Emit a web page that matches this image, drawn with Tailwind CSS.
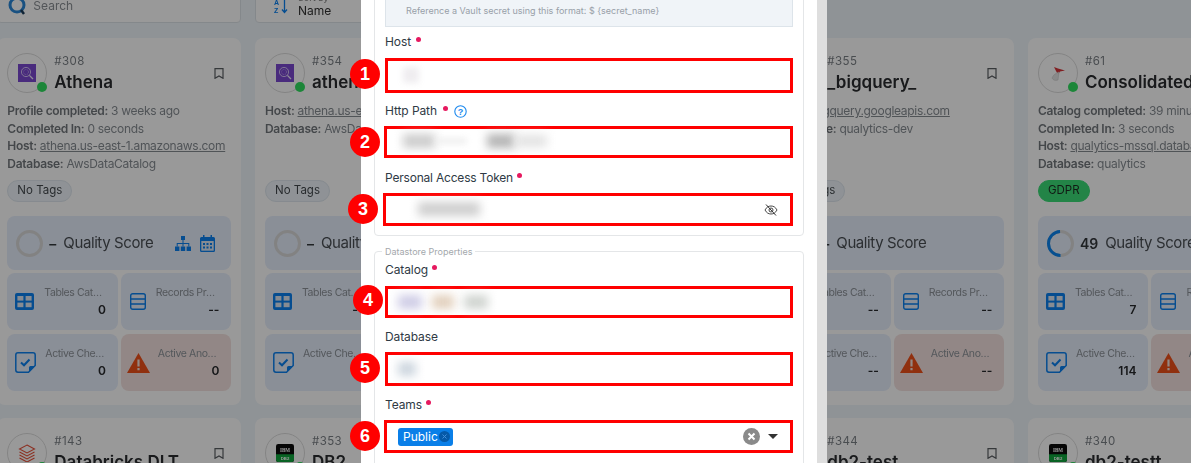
<!DOCTYPE html>
<html lang="en">
<head>
  <meta charset="UTF-8">
  <meta name="viewport" content="width=device-width, initial-scale=1.0">
  <title>Add Datastore</title>
  <script src="https://cdn.jsdelivr.net/npm/@tailwindcss/browser@4"></script>
</head>
<body class="m-0 font-['Inter','Noto_Sans',sans-serif]">
  <!-- shared icons -->
  <svg class="hidden">
    <symbol id="i-bookmark" viewBox="0 0 10 11"><path d="M1 .7h8v9.6L5 8 1 10.3z" fill="none" stroke="currentColor" stroke-width="1.2"/></symbol>
    <symbol id="i-table" viewBox="0 0 19 17"><rect width="19" height="17" rx="2" fill="currentColor"/><rect x="2.4" y="3" width="6" height="4.6" fill="#dfe8f3"/><rect x="10.6" y="3" width="6" height="4.6" fill="#dfe8f3"/><rect x="2.4" y="9.6" width="6" height="4.6" fill="#dfe8f3"/><rect x="10.6" y="9.6" width="6" height="4.6" fill="#dfe8f3"/></symbol>
    <symbol id="i-records" viewBox="0 0 16 17"><rect x=".7" y=".7" width="14.6" height="15.6" rx="2" fill="none" stroke="currentColor" stroke-width="1.4"/><path d="M1 6h14M1 11h14" stroke="currentColor" stroke-width="1.4"/></symbol>
    <symbol id="i-check" viewBox="0 0 21 21"><path d="M3 .8h15A2.2 2.2 0 0 1 20.200 3v10.500L13.500 20.200H3A2.200 2.200 0 0 1 .8 18V3A2.200 2.200 0 0 1 3 .8z" fill="none" stroke="currentColor" stroke-width="1.500"/><path d="M14 20v-4.500a1.500 1.500 0 0 1 1.500-1.500H20z" fill="currentColor"/><path d="M6 10.500l3 2.800 5.500-5.800" fill="none" stroke="currentColor" stroke-width="2"/></symbol>
    <symbol id="i-warning" viewBox="0 0 23 20"><path d="M11.500 0L23 20H0z" fill="currentColor"/><path d="M10.400 6.500h2.200v7h-2.200zM10.400 15h2.200v2.300h-2.200z" fill="#f6e3de"/></symbol>
    <symbol id="i-tree" viewBox="0 0 16 15"><g fill="currentColor"><rect x="6" y="0" width="4" height="4"/><rect x="0" y="10.500" width="4.400" height="4.500"/><rect x="5.800" y="10.500" width="4.400" height="4.500"/><rect x="11.600" y="10.500" width="4.400" height="4.500"/><path d="M7.500 4h1v3h5.800v3.500h-1V8H8.500v2.500h-1V8H2.700v2.500h-1V7h5.800z"/></g></symbol>
    <symbol id="i-calendar" viewBox="0 0 15 17"><path d="M1.500 2h12A1.500 1.500 0 0 1 15 3.500v12a1.500 1.500 0 0 1-1.500 1.500h-12A1.500 1.500 0 0 1 0 15.500v-12A1.500 1.500 0 0 1 1.500 2z" fill="currentColor"/><rect x="1.300" y="6" width="12.400" height="9.700" fill="#dfe8f3"/><path d="M3 0h1.500v3H3zM10.500 0H12v3h-1.500z" fill="currentColor"/><g fill="currentColor"><rect x="3" y="8" width="2" height="2"/><rect x="6.500" y="8" width="2" height="2"/><rect x="10" y="8" width="2" height="2"/><rect x="3" y="11.500" width="2" height="2"/><rect x="6.500" y="11.500" width="2" height="2"/><rect x="10" y="11.500" width="2" height="2"/></g></symbol>
    <symbol id="l-athena" viewBox="0 0 18 18"><rect width="18" height="18" fill="#7a48d0"/><circle cx="8" cy="8" r="4.600" fill="none" stroke="#dccdf7" stroke-width=".9"/><circle cx="8" cy="8" r="2.500" fill="none" stroke="#dccdf7" stroke-width=".6" stroke-dasharray="1 .8"/><path d="M11.400 11.400l3.600 3.600" stroke="#efe8fc" stroke-width="1.300"/></symbol>
    <symbol id="l-bigquery" viewBox="0 0 18 18"><path d="M5 1h8l4 8-4 8H5L1 9z" fill="#5a8de8"/><circle cx="8.500" cy="8.500" r="3.500" fill="none" stroke="#fff" stroke-width="1.300"/><path d="M11 11l3 3" stroke="#fff" stroke-width="1.400"/></symbol>
    <symbol id="l-mssql" viewBox="0 0 18 18"><path d="M5 3l4 1.500 7 2-5 1-2 3-2-3.500z" fill="#d8353a"/><path d="M3 14c1-3 4-5 7-6l-1 8c-3 1-5 0-6-2z" fill="#e4e4e4" stroke="#c4c4c4" stroke-width=".5"/></symbol>
    <symbol id="l-databricks" viewBox="0 0 18 18"><g fill="none" stroke="#e8533c" stroke-width="1.100"><path d="M9 1l7.500 4L9 9 1.500 5z"/><path d="M1.500 8L9 12l7.500-4"/><path d="M1.500 11L9 15l7.500-4"/><path d="M1.500 14L9 18l7.500-4"/></g></symbol>
    <symbol id="l-db2" viewBox="0 0 16 16"><rect width="16" height="16" rx="2" fill="#0b0b0b"/><path d="M0 9h16v5a2 2 0 0 1-2 2H2a2 2 0 0 1-2-2z" fill="#0fa53c"/><text x="8" y="7" font-size="4.500" font-weight="700" text-anchor="middle" fill="#fff" font-family="Liberation Serif">IBM</text><text x="8" y="14" font-size="3.800" font-weight="700" text-anchor="middle" fill="#fff" font-family="Liberation Sans">DB2</text></symbol>
  </svg>

  <div class="relative h-[463px] w-[1191px] overflow-hidden bg-[#eef5fa]">
    <!-- page behind the dialog -->
    <div class="blur-[0.5px]">
      <div class="-mt-[13px] ml-[-2.67px] grid grid-cols-[repeat(5,244px)] gap-x-[13.67px]">
        <div class="flex h-[36px] items-end gap-[6px] rounded border border-[#dde3e8] bg-white pb-[8px] pl-[10px]">
          <svg class="mb-[-1px] h-[19px] w-[19px] text-[#2b88d8]" viewBox="0 0 19 19"><circle cx="9" cy="9" r="7" fill="none" stroke="currentColor" stroke-width="3"/><path d="M13 14l3 4" stroke="#1c3d5a" stroke-width="2.500"/></svg>
          <span class="text-[12px] leading-[16px] text-[#8a8f94]">Search</span>
        </div>
        <div class="col-span-2 flex h-[36px] items-end gap-[9px] rounded border border-[#dde3e8] bg-white pb-[4px] pl-[18px]">
          <svg class="mb-[4px] h-[15px] w-[15px] text-[#0a80f0]" viewBox="0 0 15 15"><text x="0" y="6" font-size="7" font-weight="700" fill="currentColor" font-family="Liberation Sans">A</text><text x="0" y="14" font-size="7" font-weight="700" fill="currentColor" font-family="Liberation Sans">Z</text><path d="M10.500 0v13M8 10.500l2.500 3 2.500-3" fill="none" stroke="currentColor" stroke-width="1.300"/></svg>
          <div class="flex flex-col">
            <span class="text-[9px] leading-[10px] text-[#777]">Sort by</span>
            <span class="text-[12px] leading-[15px] text-[#333]">Name</span>
          </div>
        </div>
      </div>
      <div id="cards" class="ml-[-2.67px] mt-[15px] grid grid-cols-[repeat(5,244px)] gap-x-[13.67px] gap-y-[13px]"></div>
    </div>

    <!-- dim overlay -->
    <div class="absolute inset-0 bg-black/40"></div>

    <!-- dialog -->
    <div class="absolute left-[361px] top-0 flex h-full">
      <div class="flex w-[456px] flex-col gap-[15px] bg-white px-[13px] text-[#2f3a45]">
        <div class="-mt-[10px] h-[246px] shrink-0 rounded border border-[#e4e6e8] px-[10px]">
          <div class="h-[36px] border border-[#dde4ea] bg-[#f0f4f8] pl-[20px] pt-[12px] text-[9px] leading-[14px] text-[#98a0a8]">Reference a Vault secret using this format: $ {secret_name}</div>

          <div class="mt-[7px] flex h-[16px] items-center gap-[5px] text-[12px] tracking-[-0.1px]">Host <span class="mb-[5px] h-[5px] w-[5px] rounded-full bg-[#e6195f]"></span></div>
          <div class="relative mt-[8px] h-[35px] border-[3px] border-[#f00] bg-white">
            <span class="absolute left-[15px] top-[6px] h-[16px] w-[16px] bg-[#efedf0] blur-[3px]"></span>
            <span class="absolute left-[-38px] top-[-2px] flex h-[30px] w-[30px] items-center justify-center rounded-full bg-[#f00] font-['Liberation_Sans'] text-[18px] font-bold text-white">1</span>
          </div>

          <div class="mt-[10px] flex h-[16px] items-center gap-[6px] text-[12px] tracking-[-0.1px]">Http Path <span class="mb-[5px] h-[5px] w-[5px] rounded-full bg-[#e6195f]"></span>
            <svg class="h-[13px] w-[13px] text-[#1a88ee]" viewBox="0 0 13 13"><circle cx="6.500" cy="6.500" r="5.700" fill="none" stroke="currentColor" stroke-width="1.100"/><text x="6.500" y="9.700" font-size="9" font-weight="600" text-anchor="middle" fill="currentColor" font-family="Liberation Sans">?</text></svg>
          </div>
          <div class="relative ml-[-1px] mt-[7px] h-[32px] border-[3px] border-[#f00] bg-white">
            <span class="absolute left-[16px] top-[5px] h-[14px] w-[32px] bg-[#cccccc] blur-[5px]"></span>
            <span class="absolute left-[50px] top-[9px] h-[6px] w-[30px] bg-[#eeeeee] blur-[3px]"></span>
            <span class="absolute left-[100px] top-[5px] h-[14px] w-[28px] bg-[#b4b4b4] blur-[5px]"></span>
            <span class="absolute left-[128px] top-[6px] h-[12px] w-[32px] bg-[#e2e2e2] blur-[5px]"></span>
            <span class="absolute left-[-37px] top-[-2px] flex h-[30px] w-[30px] items-center justify-center rounded-full bg-[#f00] font-['Liberation_Sans'] text-[18px] font-bold text-white">2</span>
          </div>

          <div class="mt-[12px] flex h-[16px] items-center gap-[4px] text-[12px] tracking-[-0.2px]">Personal Access Token <span class="mb-[5px] h-[5px] w-[5px] rounded-full bg-[#e6195f]"></span></div>
          <div class="relative ml-[-2px] mt-[7px] flex h-[33px] items-center justify-end border-[3px] border-[#f00] bg-white pr-[12px]">
            <span class="absolute left-[32px] top-[6px] h-[14px] w-[62px] bg-[#cfcfcf] blur-[5px]"></span>
            <svg class="h-[14px] w-[14px] text-[#333]" viewBox="0 0 14 14"><path d="M1 7c1.500-2.800 3.500-4 6-4s4.500 1.200 6 4c-1.500 2.800-3.500 4-6 4S2.500 9.800 1 7z" fill="none" stroke="currentColor" stroke-width=".9"/><circle cx="7" cy="7" r="2" fill="none" stroke="currentColor" stroke-width=".9"/><path d="M2 1.500l10 11" stroke="currentColor" stroke-width="1"/></svg>
            <span class="absolute left-[-38px] top-[-2px] flex h-[30px] w-[30px] items-center justify-center rounded-full bg-[#f00] font-['Liberation_Sans'] text-[18px] font-bold text-white">3</span>
          </div>
        </div>

        <div class="relative h-[260px] shrink-0 rounded border border-[#e4e6e8] px-[10px] pt-[10px]">
          <span class="absolute left-[7px] top-[-7px] bg-white px-[3px] text-[9px] leading-[13px] text-[#a4a8ac]">Datastore Properties</span>

          <div class="flex h-[16px] items-center gap-[4px] text-[12px] tracking-[-0.1px]">Catalog <span class="mb-[5px] h-[5px] w-[5px] rounded-full bg-[#e6195f]"></span></div>
          <div class="relative mt-[8px] h-[32px] border-[3px] border-[#f00] bg-white">
            <span class="absolute left-[10px] top-[6px] h-[14px] w-[24px] bg-[#cfcde6] blur-[5px]"></span>
            <span class="absolute left-[44px] top-[6px] h-[14px] w-[22px] bg-[#e2d0bd] blur-[5px]"></span>
            <span class="absolute left-[76px] top-[6px] h-[14px] w-[24px] bg-[#d0d4d0] blur-[5px]"></span>
            <span class="absolute left-[-35px] top-[-4px] flex h-[30px] w-[30px] items-center justify-center rounded-full bg-[#f00] font-['Liberation_Sans'] text-[18px] font-bold text-white">4</span>
          </div>

          <div class="mt-[11px] flex h-[16px] items-center text-[12px] tracking-[-0.1px]">Database</div>
          <div class="relative mt-[7px] h-[34px] border-[3px] border-[#f00] bg-white">
            <span class="absolute left-[10px] top-[7px] h-[14px] w-[18px] bg-[#ccd5de] blur-[5px]"></span>
            <span class="absolute left-[-38px] top-[-2px] flex h-[30px] w-[30px] items-center justify-center rounded-full bg-[#f00] font-['Liberation_Sans'] text-[18px] font-bold text-white">5</span>
          </div>

          <div class="mt-[11px] flex h-[16px] items-center gap-[4px] text-[12px] tracking-[-0.1px]">Teams <span class="mb-[5px] h-[5px] w-[5px] rounded-full bg-[#e6195f]"></span></div>
          <div class="relative ml-[-1px] mt-[7px] flex h-[33px] items-center border-[3px] border-[#f00] bg-white pl-[11px] pr-[12px]">
            <span class="flex h-[18px] w-[55px] items-center gap-[1px] rounded-[3px] bg-[#0a7fe8] pl-[5px] text-[12px] text-white">Public
              <svg class="h-[11px] w-[11px] shrink-0" viewBox="0 0 11 11"><circle cx="5.500" cy="5.500" r="5.500" fill="#0559a8"/><path d="M3.500 3.500l4 4M7.500 3.500l-4 4" stroke="#3f8fdc" stroke-width="1"/></svg>
            </span>
            <svg class="ml-auto h-[17px] w-[17px]" viewBox="0 0 17 17"><circle cx="8.500" cy="8.500" r="8.500" fill="#8a8a8a"/><path d="M5.500 5.500l6 6M11.500 5.500l-6 6" stroke="#fff" stroke-width="2"/></svg>
            <span class="ml-[8px] h-0 w-0 border-x-[5px] border-t-[5px] border-x-transparent border-t-[#333]"></span>
            <span class="absolute left-[-37px] top-[-2px] flex h-[30px] w-[30px] items-center justify-center rounded-full bg-[#f00] font-['Liberation_Sans'] text-[18px] font-bold text-white">6</span>
          </div>
        </div>
      </div>
      <div class="w-[10px] bg-[#dedede]"></div>
    </div>
  </div>

  <script>
    // Datastore cards behind the dialog, null = card fully hidden by the dialog
    const datastores = [
      { id: 308, name: 'Athena', logo: 'l-athena', tag: 'No Tags', tools: true, score: '–', ring: false,
        details: [['Profile completed:', '3 weeks ago'], ['Completed In:', '0 seconds'], ['Host:', 'athena.us-east-1.amazonaws.com', true], ['Database:', 'AwsDataCatalog']],
        stats: ['0', '--', '0', '0'] },
      { id: 354, name: 'athena', logo: 'l-athena', tag: 'No Tags', score: '–', ring: false,
        details: [['Host:', 'athena.us-east-1.amazonaws.com', true], ['Database:', 'AwsDataCatalog']],
        stats: ['--', '--', '--', '--'] },
      null,
      { id: 355, name: '_bigquery_', logo: 'l-bigquery', tag: 'No Tags', score: '–', ring: false,
        details: [['Host:', 'bigquery.googleapis.com', true], ['Database:', 'qualytics-dev']],
        stats: ['--', '--', '--', '--'] },
      { id: 61, name: 'Consolidated Balance', logo: 'l-mssql', tag: 'GDPR', score: '49', ring: true,
        details: [['Catalog completed:', '39 minutes ago'], ['Completed In:', '3 seconds'], ['Host:', 'qualytics-mssql.database.windows.net', true], ['Database:', 'qualytics']],
        stats: ['7', '--', '114', '--'] },
      { id: 143, name: 'Databricks DLT', logo: 'l-databricks', tag: 'No Tags', score: '–', details: [], stats: [] },
      { id: 353, name: 'DB2', logo: 'l-db2', tag: 'No Tags', score: '–', details: [], stats: [] },
      null,
      { id: 344, name: 'db2-test', logo: 'l-db2', tag: 'No Tags', score: '–', details: [], stats: [] },
      { id: 340, name: 'db2-testt', logo: 'l-db2', tag: 'No Tags', score: '–', details: [], stats: [] },
    ];

    function statPanel(icon, iconClass, title, value, red) {
      return `
        <div class="flex h-[57px] items-center rounded-[8px] ${red ? 'bg-[#f4e2e0]' : 'bg-[#e6eefc]'} pl-[8px] pr-[12px]">
          <svg class="${iconClass}"><use href="#${icon}"></use></svg>
          <div class="flex min-w-0 flex-1 flex-col items-end">
            <span class="w-full truncate text-[10.500px] leading-[16px] tracking-[-0.4px] text-[#8c9298]">${title}</span>
            <span class="text-[12px] font-semibold leading-[17px] text-[#27292c]">${value}</span>
          </div>
        </div>`;
    }

    function renderCards() {
      const cards = document.getElementById('cards');
      datastores.forEach(store => {
        const card = document.createElement('div');
        card.className = 'h-[367px] overflow-hidden rounded-[8px] bg-white px-[10px] pt-[15px]';
        if (!store) {
          cards.appendChild(card);
          return;
        }
        const details = store.details.map(([label, value, link]) => `
          <div class="h-[17.700px] whitespace-nowrap text-[12px] leading-[17.700px] tracking-[-0.3px] text-[#868c92]">
            <span class="font-semibold text-[#72777c]">${label}</span>
            <span class="${link ? 'underline' : ''}">${value}</span>
          </div>`).join('');
        const tagClass = store.tag === 'GDPR'
          ? 'border-[#3bdc77] bg-[#3bdc77] text-[#1d2b22]'
          : 'border-[#dfe7ef] bg-[#eef4fa] text-[#44494e]';
        const ring = store.ring
          ? '<circle cx="13.500" cy="13.500" r="12" fill="none" stroke="#0a84f0" stroke-width="3" stroke-dasharray="37 76" transform="rotate(90 13.500 13.500)"/>'
          : '';
        const tools = store.tools ? `
          <svg class="ml-auto h-[15px] w-[16px] text-[#0a80f0]"><use href="#i-tree"></use></svg>
          <svg class="ml-[9px] h-[17px] w-[15px] text-[#0a80f0]"><use href="#i-calendar"></use></svg>` : '';
        card.innerHTML = `
          <div class="flex">
            <div class="relative flex h-[40px] w-[40px] shrink-0 items-center justify-center rounded-full border border-[#dcdcdc]">
              <svg class="h-[18px] w-[18px]"><use href="#${store.logo}"></use></svg>
              <span class="absolute left-[29px] top-[28px] h-[10px] w-[10px] rounded-full bg-[#30e060]"></span>
            </div>
            <div class="ml-[7px] min-w-0 flex-1">
              <div class="text-[11.500px] leading-[16px] tracking-[0.4px] text-[#7b8086]">#${store.id}</div>
              <div class="mt-[1px] whitespace-nowrap text-[17px] font-semibold leading-[24px] text-[#2a2c2f]">${store.name}</div>
            </div>
            <svg class="ml-[4px] mr-[7px] mt-[15px] h-[11px] w-[10px] shrink-0 text-[#5b5f63]"><use href="#i-bookmark"></use></svg>
          </div>
          <div class="mt-[8px] h-[72px]">${details}</div>
          <span class="mt-[6px] inline-flex h-[22px] items-center rounded-full border px-[9px] text-[11.500px] ${tagClass}">${store.tag}</span>
          <div class="mt-[14px] flex h-[54px] items-center rounded-[8px] bg-[#e6eefc] pl-[9px] pr-[16px]">
            <svg class="h-[27px] w-[27px] shrink-0" viewBox="0 0 27 27"><circle cx="13.500" cy="13.500" r="12" fill="none" stroke="#d9d9d9" stroke-width="3"/>${ring}</svg>
            <span class="ml-[6px] text-[14px] font-semibold text-[#33373b]">${store.score}</span>
            <span class="ml-[7px] whitespace-nowrap text-[15px] tracking-[-0.4px] text-[#4a4f54]">Quality Score</span>
            ${tools}
          </div>
          <div class="mt-[3px] grid grid-cols-2 gap-[3px] gap-y-[4px]">
            ${statPanel('i-table', 'mr-[10px] h-[17px] w-[19px] shrink-0 text-[#0a80f0]', 'Tables Cataloged', store.stats[0] || '--')}
            ${statPanel('i-records', 'mr-[10px] ml-[1px] h-[17px] w-[16px] shrink-0 text-[#0a80f0]', 'Records Profiled', store.stats[1] || '--')}
            ${statPanel('i-check', 'mr-[9px] h-[21px] w-[21px] shrink-0 text-[#0a80f0]', 'Active Checks', store.stats[2] || '--')}
            ${statPanel('i-warning', 'mr-[8px] -ml-[2px] h-[20px] w-[23px] shrink-0 text-[#f0501a]', 'Active Anomalies', store.stats[3] || '--', true)}
          </div>`;
        cards.appendChild(card);
      });
    }

    renderCards();
  </script>
</body>
</html>
